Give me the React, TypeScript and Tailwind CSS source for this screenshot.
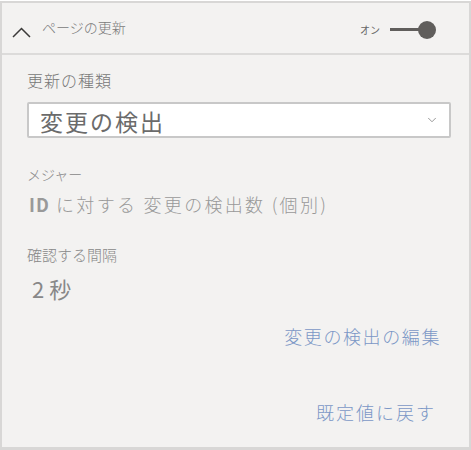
import { ChevronDown } from 'lucide-react'

const jp = { fontFamily: '"Noto Sans CJK JP", "Noto Sans", sans-serif' }

export default function App() {
  return (
    <div className="w-[471px] h-[450px] bg-[#f3f2f1]" style={jp}>
      <div className="mt-[1px] h-[449px] flex flex-col border-x-2 border-t-2 border-b-[3px] border-[#d8d7d6]">
        {/* ヘッダー */}
        <div className="h-[52px] flex items-center pl-[10px] pr-[33px] border-b-2 border-[#dcdbda]">
          <svg width="19" height="11" viewBox="0 0 19 11" className="mt-[8px]">
            <polyline points="1,10 9.5,1.5 18,10" fill="none" stroke="#3b3a39" strokeWidth="1.5" />
          </svg>
          <span className="ml-[11px] text-[14px] text-[#7a7a7a] leading-none mb-[2px] font-light">ページの更新</span>
          <div className="ml-auto flex items-center">
            <span className="text-[10px] text-[#666] leading-none mr-[10px] mt-[3px]">オン</span>
            <div className="relative w-[46px] h-[18px] mt-[4px]">
              <div className="absolute left-0 top-[7px] w-[34px] h-[3px] bg-[#605e5c]" />
              <div className="absolute right-0 top-0 w-[18px] h-[18px] rounded-full bg-[#605e5c]" />
            </div>
          </div>
        </div>

        {/* 本体 */}
        <div className="flex-1 flex flex-col pl-[25px] pr-[18px] font-light">
          <div className="mt-[14px] text-[16px] leading-[22px] tracking-[1px] text-[#777]">更新の種類</div>
          <div className="mt-[11px] h-[36px] flex items-center bg-white border-2 border-[#c8c8c8] rounded-[2px] pl-[11px] pr-[10px]">
            <span className="text-[23px] tracking-[2px] leading-none text-[#6b6b6b] mt-[2px] font-normal">変更の検出</span>
            <ChevronDown className="ml-auto w-[14px] h-[14px] text-[#777]" strokeWidth={1.3} />
          </div>

          <div className="mt-[26px] text-[14px] leading-[20px] text-[#888]">メジャー</div>
          <div className="mt-[9px] text-[18px] leading-[22px] tracking-[2.3px] text-[#999] pl-[2px]">
            <span className="font-bold tracking-[1px]">ID</span> に対する 変更の検出数 (個別)
          </div>

          <div className="mt-[30px] text-[15px] leading-[20px] text-[#888]">確認する間隔</div>
          <div className="mt-[10px] text-[22px] leading-[26px] text-[#888] pl-[5px] font-normal">2 秒</div>

          <div className="mt-[23px] self-end mr-[10px] text-[18px] leading-[24px] tracking-[1.6px] text-[#7b97c6]">変更の検出の編集</div>
          <div className="mt-[52px] self-end mr-[15px] text-[18px] leading-[24px] tracking-[2px] text-[#7b97c6]">既定値に戻す</div>
        </div>
      </div>
    </div>
  )
}
